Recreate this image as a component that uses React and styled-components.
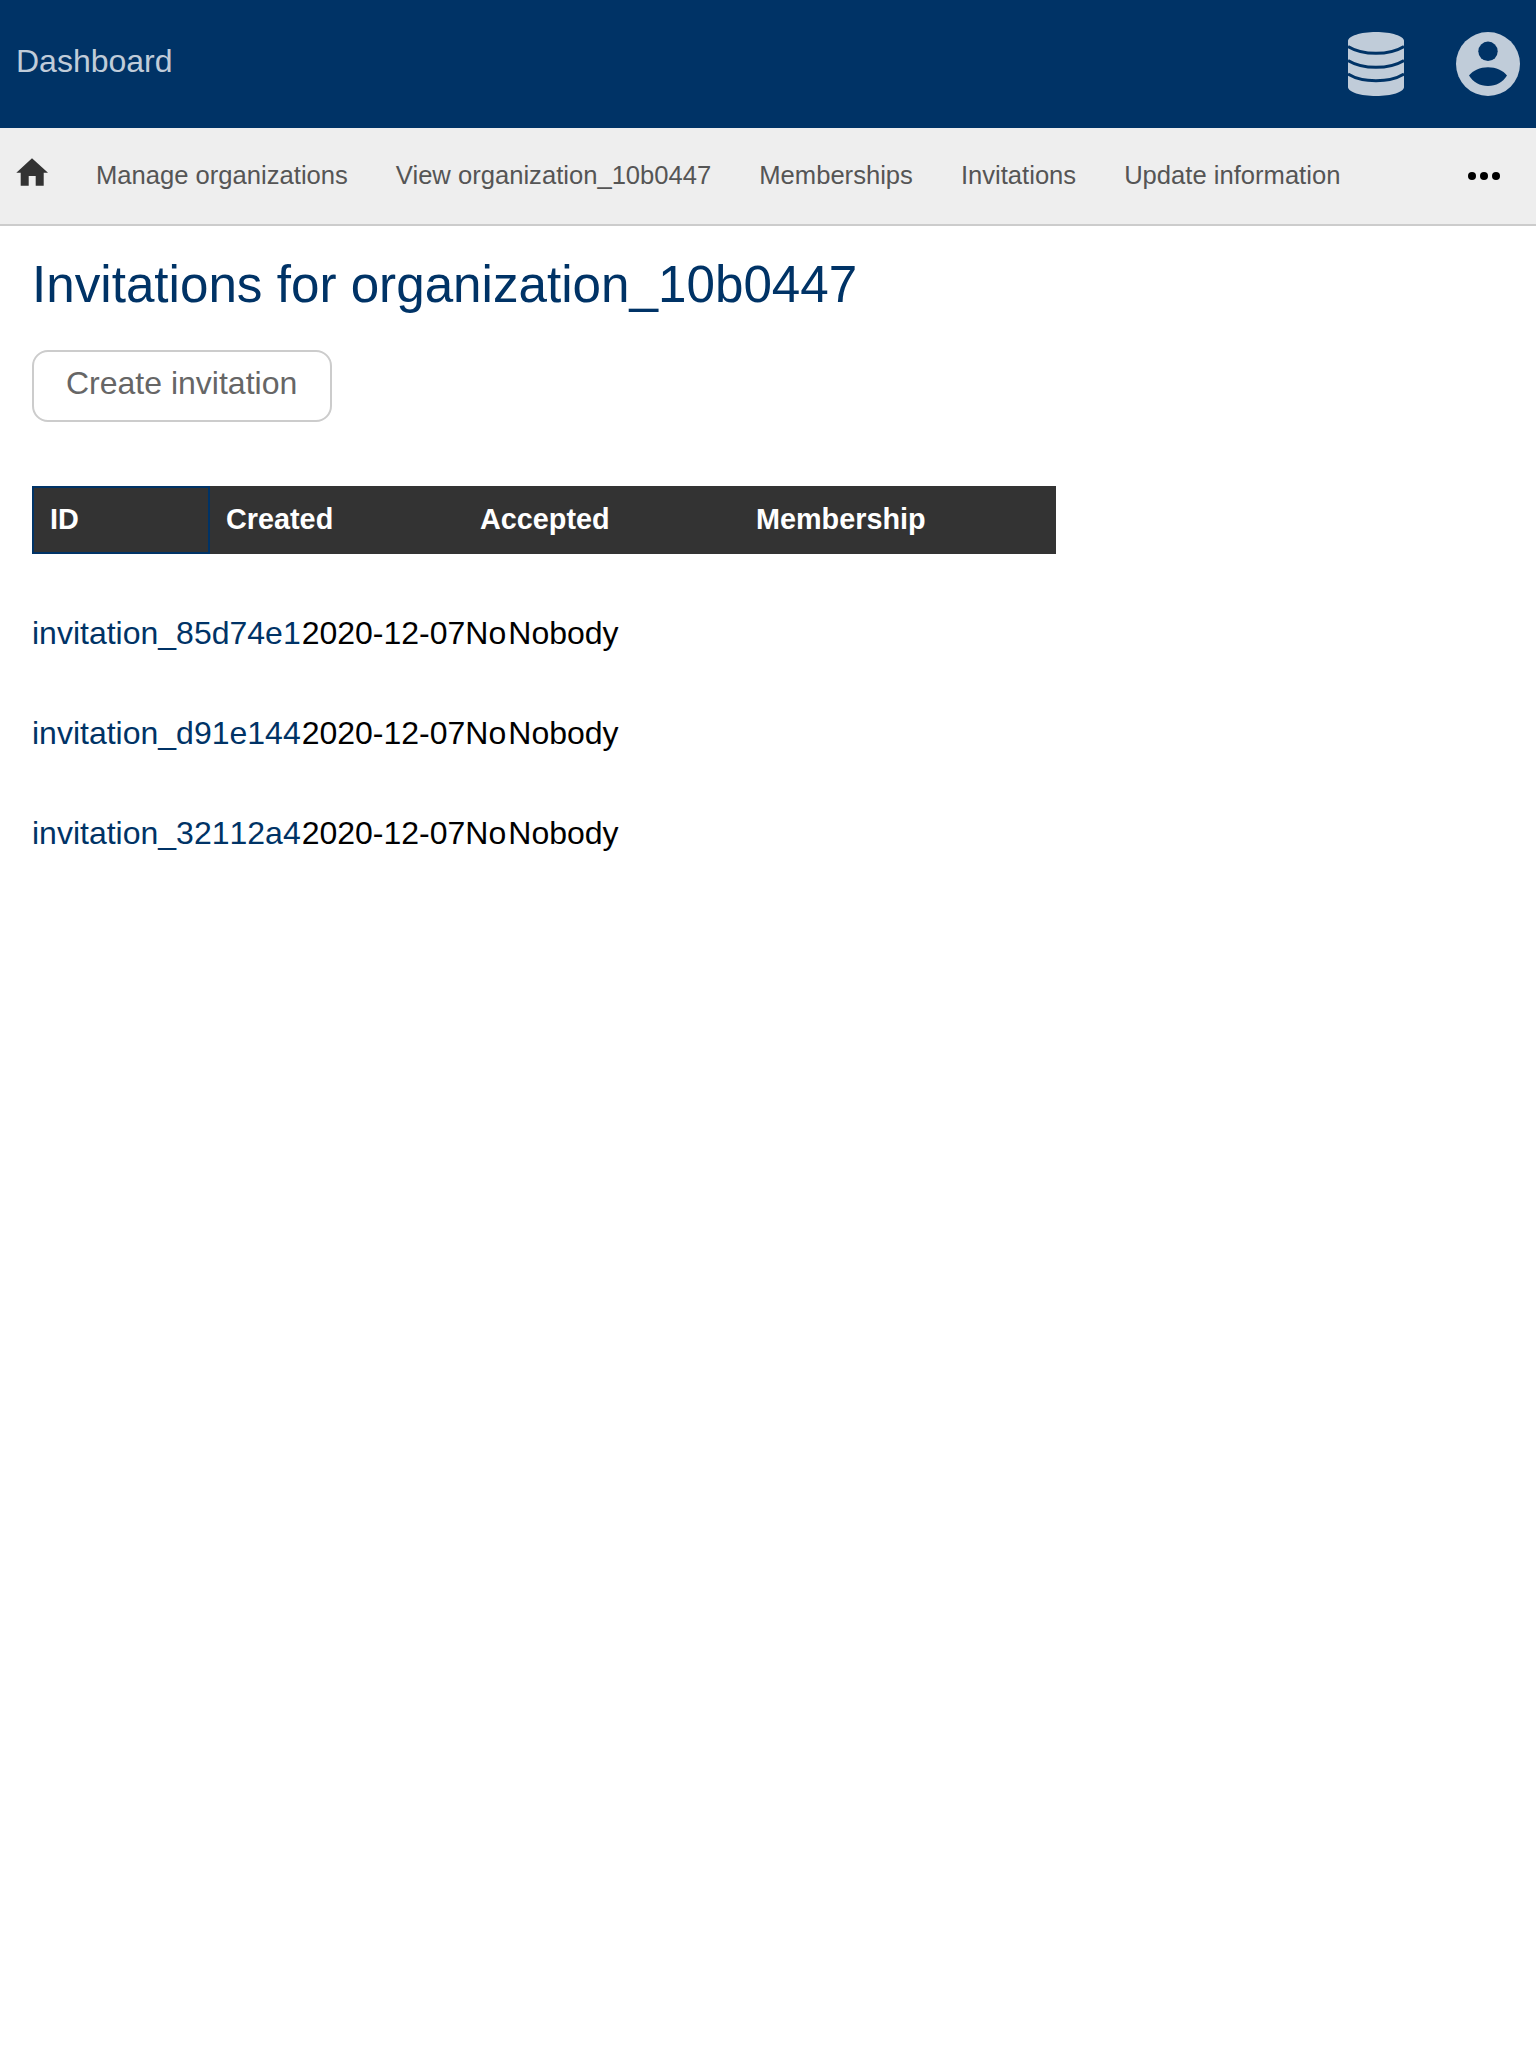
import React from 'react';
import styled, { createGlobalStyle } from 'styled-components';

const Global = createGlobalStyle`
  html, body { margin: 0; padding: 0; background: #fff; }
  body { font-family: "Liberation Sans", Arial, sans-serif; }
`;
const Header = styled.header`
  height: 128px; background: #003366; display: flex; align-items: center;
  padding: 0 16px; box-sizing: border-box; color: #c0ccd9;
`;
const Brand = styled.a`
  font-size: 32px; color: #c0ccd9; margin-right: auto; margin-bottom: 6px;
`;
const HeaderIcons = styled.div`
  display: flex; align-items: center; gap: 52px;
  svg { display: block; }
`;
const Nav = styled.nav`
  height: 98px; background: #eee; border-bottom: 2px solid #ccc; box-sizing: border-box;
  display: flex; align-items: center; padding: 0 16px;
`;
const HomeLink = styled.a`
  width: 32px; height: 28px; margin-right: 48px; display: block; margin-bottom: 8px;
  svg { display: block; }
`;
const NavList = styled.div`
  display: flex; gap: 48px; flex: 1;
`;
const NavItem = styled.a`
  font-size: 25.6px; color: #555; margin-bottom: 2px;
`;
const Dots = styled.div`
  display: flex; gap: 4px; margin-right: 20px;
`;
const Dot = styled.span`
  width: 8px; height: 8px; border-radius: 50%; background: #000;
`;
const Main = styled.main`
  padding: 0 32px;
`;
const Title = styled.h1`
  font-size: 51.2px; font-weight: 400; color: #003366; margin: 0; padding-top: 30px; line-height: 58px;
`;
const Button = styled.a`
  display: inline-flex; align-items: center; box-sizing: border-box; height: 72px; margin-top: 36px;
  padding: 0 33px 6px 32px; border: 2px solid #ccc; border-radius: 16px; font-size: 32px; color: #666; line-height: 1;
`;
const TableHead = styled.div`
  width: 1024px; height: 68px; margin-top: 64px; background: #333; display: flex;
  font-size: 28.8px; font-weight: 700; color: #fff;
`;
const HeadCell = styled.div`
  width: ${p => p.$w}px; box-sizing: border-box; display: flex; align-items: center;
  padding-left: ${p => p.$pad}px; padding-bottom: 2px;
  border: ${p => (p.$active ? '2px solid #003366' : '0')};
`;
const RowsTable = styled.table`
  border-collapse: collapse; margin-top: 29px; font-size: 32px; line-height: 36px; color: #000;
  font-kerning: none;
`;
const Cell = styled.td`
  padding: 32px ${p => p.$gap || 0}px 32px 0;
`;
const IdLink = styled.a`
  color: #003366;
`;

const rows = ['invitation_85d74e1', 'invitation_d91e144', 'invitation_32112a4'];

const DatabaseIcon = () => (
  <svg width="56" height="64" viewBox="0 0 56 64">
    <path fill="#c0ccd9" d="M0 9C0 4 12.500 0 28 0S56 4 56 9V55C56 60 43.500 64 28 64S0 60 0 55Z" />
    <g fill="none" stroke="#003366" strokeWidth="3">
      <path d="M0 14.500C8 19.500 18 21.300 28 21.300S48 19.500 56 14.500" />
      <path d="M0 28.500C8 33.500 18 35.300 28 35.300S48 33.500 56 28.500" />
      <path d="M0 42C8 47 18 48.700 28 48.700S48 47 56 42" />
    </g>
  </svg>
);
const UserIcon = () => (
  <svg width="64" height="64" viewBox="0 0 64 64">
    <circle cx="32" cy="32" r="32" fill="#c0ccd9" />
    <circle cx="32" cy="19.300" r="9.700" fill="#003366" />
    <path fill="#003366" d="M13 43.500C17 38.500 24 35.300 32 35.300S47 38.500 51 43.500C47 50 40 54 32 54S17 50 13 43.500Z" />
  </svg>
);
const HomeIcon = () => (
  <svg width="32" height="28" viewBox="0 0 32 28">
    <path fill="#333" d="M16 .300 .300 14.700H4.700V27.700H12.700V18H19.700V27.700H27.700V14.700H32Z" />
  </svg>
);

export default function App() {
  return (
    <>
      <Global />
      <Header>
        <Brand>Dashboard</Brand>
        <HeaderIcons>
          <DatabaseIcon />
          <UserIcon />
        </HeaderIcons>
      </Header>
      <Nav>
        <HomeLink><HomeIcon /></HomeLink>
        <NavList>
          <NavItem>Manage organizations</NavItem>
          <NavItem>View organization_10b0447</NavItem>
          <NavItem>Memberships</NavItem>
          <NavItem>Invitations</NavItem>
          <NavItem>Update information</NavItem>
        </NavList>
        <Dots><Dot /><Dot /><Dot /></Dots>
      </Nav>
      <Main>
        <Title>Invitations for organization_10b0447</Title>
        <Button>Create invitation</Button>
        <TableHead>
          <HeadCell $w={178} $pad={16} $active>ID</HeadCell>
          <HeadCell $w={254} $pad={16}>Created</HeadCell>
          <HeadCell $w={276} $pad={16}>Accepted</HeadCell>
          <HeadCell $w={316} $pad={16}>Membership</HeadCell>
        </TableHead>
        <RowsTable>
          <tbody>
            {rows.map(r => (
              <tr key={r}>
                <Cell $gap={1}><IdLink>{r}</IdLink></Cell>
                <Cell>2020-12-07</Cell>
                <Cell $gap={2}>No</Cell>
                <Cell>Nobody</Cell>
              </tr>
            ))}
          </tbody>
        </RowsTable>
      </Main>
    </>
  );
}
